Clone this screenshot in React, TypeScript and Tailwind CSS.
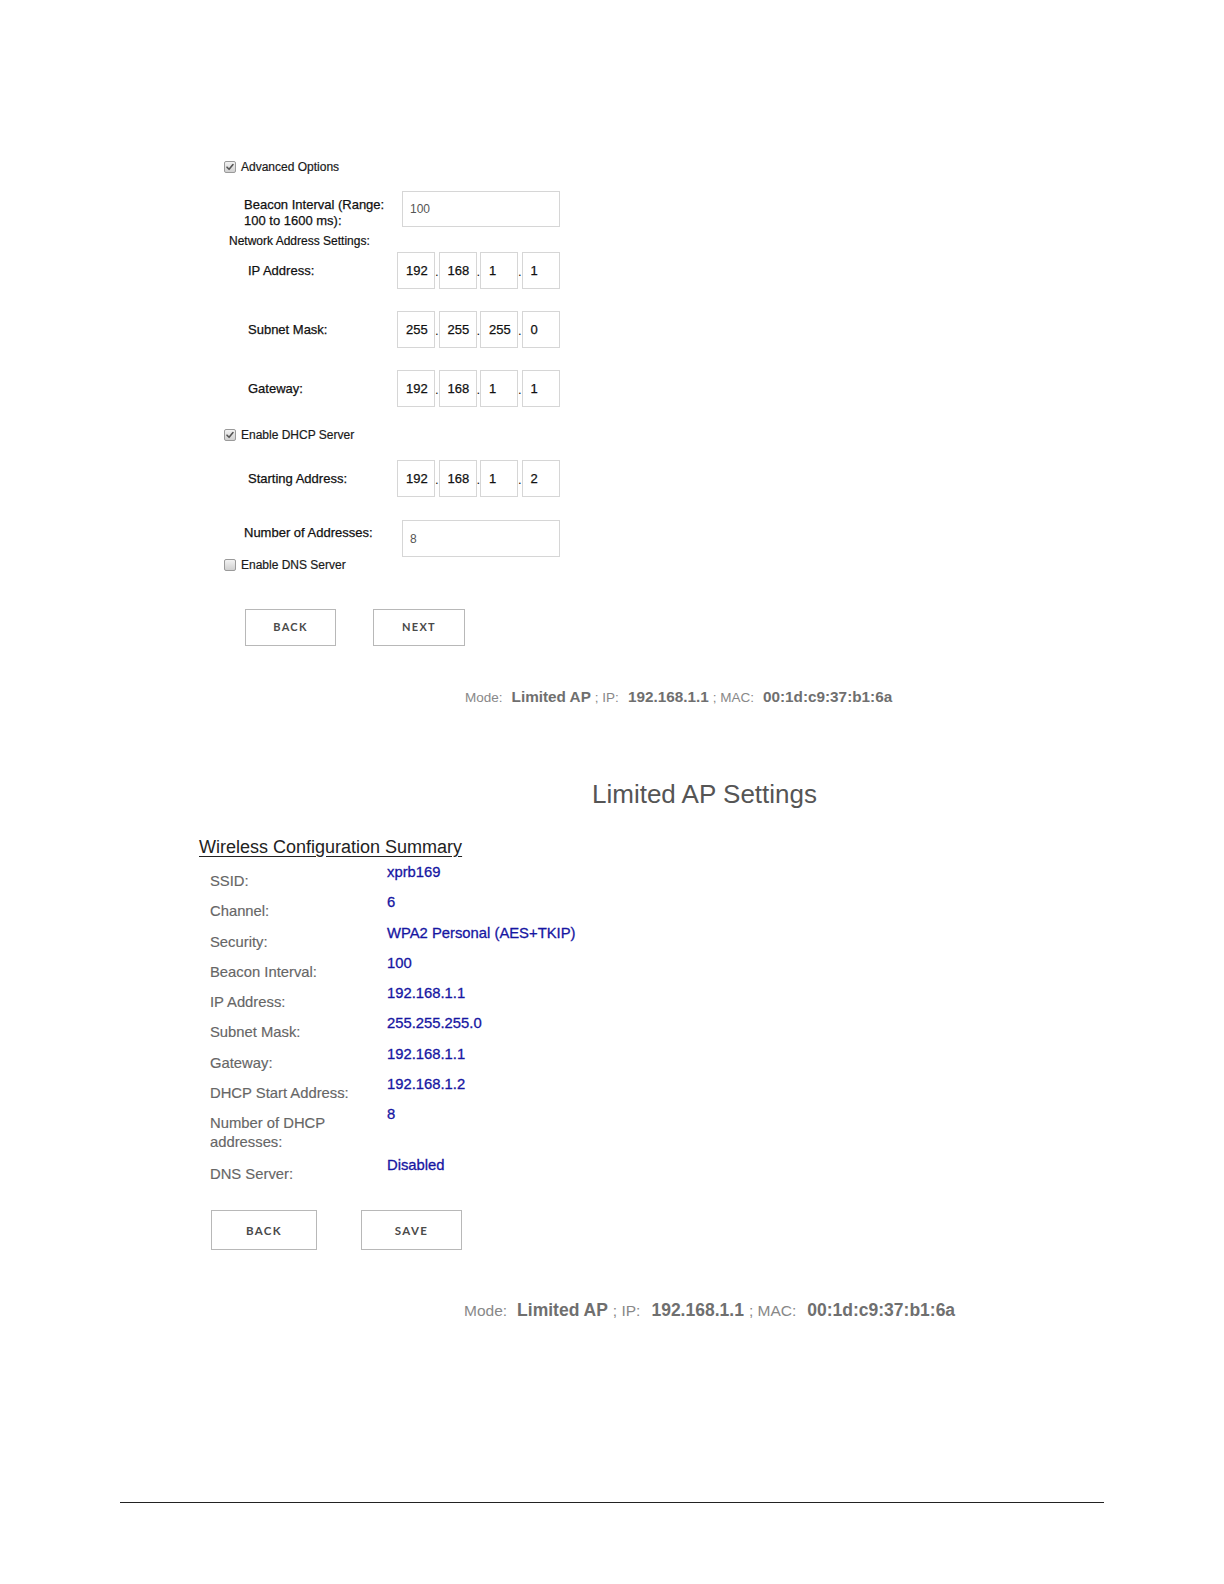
import React from 'react';

const sans = { fontFamily: '"Liberation Sans", Arial, sans-serif' };

function Check({ checked }: { checked: boolean }) {
  return (
    <span className="inline-flex h-[12px] w-[12px] items-center justify-center rounded-[2px] border border-[#9a9a9a] bg-gradient-to-b from-[#f2f2f2] to-[#d0d0d0]">
      {checked && (
        <svg viewBox="0 0 10 10" className="h-[10px] w-[10px]">
          <path d="M2 5.2 L4.1 7.3 L8 2.6" fill="none" stroke="#555" strokeWidth="1.6" strokeLinecap="round" strokeLinejoin="round" />
        </svg>
      )}
    </span>
  );
}

function CheckRow({ checked, label, className }: { checked: boolean; label: string; className: string }) {
  return (
    <div className={`flex h-[14px] items-center gap-[5px] text-[12px] leading-[14px] text-[#1a1a1a] ${className}`}>
      <Check checked={checked} />
      <span className="[-webkit-text-stroke:0.2px_#1a1a1a]">{label}</span>
    </div>
  );
}

function IpRow({ label, octets, className }: { label: string; octets: string[]; className: string }) {
  return (
    <div className={`flex h-[37px] items-center ${className}`}>
      <div className="w-[173px] pl-[24px] text-[13px] text-[#111] [-webkit-text-stroke:0.25px_#111]">{label}</div>
      <div className="flex h-full">
        {octets.map((o, i) => (
          <React.Fragment key={i}>
            {i > 0 && (
              <span className="flex w-[3.5px] items-center justify-center pt-[1px] text-[13px] leading-none text-[#111]">.</span>
            )}
            <div className="flex h-full w-[38px] items-center border border-[#d6d6d6] pl-[8px] text-[13px] text-[#111] [-webkit-text-stroke:0.25px_#111]">
              {o}
            </div>
          </React.Fragment>
        ))}
      </div>
    </div>
  );
}

function Footer({ big, className }: { big?: boolean; className: string }) {
  const small = big ? 'text-[15.5px]' : 'text-[13.5px]';
  const val = big ? 'text-[17.5px]' : 'text-[15.3px]';
  const h = big ? 'h-[20px] leading-[20px]' : 'h-[18px] leading-[18px]';
  const semi = big ? 'ml-[5px]' : 'ml-[4px]';
  const gap = big ? 'ml-[11px]' : 'ml-[9px]';
  return (
    <div className={`flex items-baseline text-[#888] ${h} ${className}`}>
      <span className={small}>Mode:</span>
      <span className={`${val} ${big ? 'ml-[10px]' : 'ml-[9px]'} font-bold text-[#6f6f6f]`}>Limited AP</span>
      <span className={`${small} ${semi}`}>; IP:</span>
      <span className={`${val} ${gap} font-bold text-[#6f6f6f]`}>192.168.1.1</span>
      <span className={`${small} ${semi}`}>; MAC:</span>
      <span className={`${val} ${gap} font-bold text-[#6f6f6f]`}>00:1d:c9:37:b1:6a</span>
    </div>
  );
}

function Btn({ label, w, h, size }: { label: string; w: string; h: string; size: string }) {
  return (
    <div
      className={`flex ${w} ${h} ${size} items-center justify-center border border-[#b8b8b8] font-bold tracking-[1.3px] text-[#4a4a4a]`}
      style={{ fontFamily: 'Lato, "Open Sans", sans-serif' }}
    >
      {label}
    </div>
  );
}

const summary: { label: string[]; value: string }[] = [
  { label: ['SSID:'], value: 'xprb169' },
  { label: ['Channel:'], value: '6' },
  { label: ['Security:'], value: 'WPA2 Personal (AES+TKIP)' },
  { label: ['Beacon Interval:'], value: '100' },
  { label: ['IP Address:'], value: '192.168.1.1' },
  { label: ['Subnet Mask:'], value: '255.255.255.0' },
  { label: ['Gateway:'], value: '192.168.1.1' },
  { label: ['DHCP Start Address:'], value: '192.168.1.2' },
  { label: ['Number of DHCP', 'addresses:'], value: '8' },
  { label: ['DNS Server:'], value: 'Disabled' },
];

export default function App() {
  return (
    <div className="min-h-[1584px] w-[1224px] bg-white" style={sans}>
      {/* Advanced options form */}
      <div className="pl-[224px] pt-[160px]">
        <CheckRow checked label="Advanced Options" className="" />

        <div className="mt-[17px] flex">
          <div className="w-[178px] pl-[20px] pt-[6px] text-[13px] leading-[16px] text-[#111] [-webkit-text-stroke:0.25px_#111]">
            Beacon Interval (Range:
            <br />
            100 to 1600 ms):
          </div>
          <div className="flex h-[36px] w-[158px] items-center border border-[#d6d6d6] pl-[7px] text-[12px] text-[#555]">
            100
          </div>
        </div>
        <div className="mt-[5px] pl-[5px] text-[12px] leading-[14px] text-[#111] [-webkit-text-stroke:0.2px_#111]">
          Network Address Settings:
        </div>

        <IpRow label="IP Address:" octets={['192', '168', '1', '1']} className="mt-[4px]" />
        <IpRow label="Subnet Mask:" octets={['255', '255', '255', '0']} className="mt-[22px]" />
        <IpRow label="Gateway:" octets={['192', '168', '1', '1']} className="mt-[22px]" />

        <CheckRow checked label="Enable DHCP Server" className="mt-[21px]" />

        <IpRow label="Starting Address:" octets={['192', '168', '1', '2']} className="mt-[18px]" />

        <div className="mt-[23px] flex">
          <div className="w-[178px] pl-[20px] pt-[5px] text-[13px] leading-[16px] text-[#111] [-webkit-text-stroke:0.25px_#111]">
            Number of Addresses:
          </div>
          <div className="flex h-[37px] w-[158px] items-center border border-[#d6d6d6] pl-[7px] text-[12px] text-[#555]">
            8
          </div>
        </div>
        <CheckRow checked={false} label="Enable DNS Server" className="mt-[1px]" />

        <div className="ml-[21px] mt-[37px] flex gap-[37px]">
          <Btn label="BACK" w="w-[91px]" h="h-[37px]" size="text-[11px]" />
          <Btn label="NEXT" w="w-[92px]" h="h-[37px]" size="text-[11px]" />
        </div>
      </div>

      <Footer className="ml-[465px] mt-[42px]" />

      {/* Summary page */}
      <div className="ml-[592px] mt-[73px] text-[26px] leading-[30px] text-[#555]">Limited AP Settings</div>

      <div className="ml-[199px] mt-[27px] text-[18px] leading-[22px] text-[#222] underline underline-offset-[3px]">
        Wireless Configuration Summary
      </div>

      <div className="ml-[210px] mt-[5px]">
        {summary.map((r) => (
          <div key={r.value + r.label[0]} className={`flex ${r.label.length > 1 ? 'h-[50.5px]' : 'h-[30.3px]'}`}>
            <div className="w-[177px] pt-[9px] text-[14.8px] leading-[19px] text-[#666] [-webkit-text-stroke:0.15px_#666]">
              {r.label.map((l) => (
                <div key={l}>{l}</div>
              ))}
            </div>
            <div className="text-[14.8px] leading-[18px] text-[#1616a2] [-webkit-text-stroke:0.3px_#1616a2]">{r.value}</div>
          </div>
        ))}
      </div>

      <div className="ml-[211px] mt-[24px] flex gap-[44px]">
        <Btn label="BACK" w="w-[106px]" h="h-[40px]" size="text-[11.5px]" />
        <Btn label="SAVE" w="w-[101px]" h="h-[40px]" size="text-[11.5px]" />
      </div>

      <Footer big className="ml-[464px] mt-[50px]" />

      <div className="ml-[120px] mt-[182px] w-[984px] border-t border-[#222]" />
    </div>
  );
}
